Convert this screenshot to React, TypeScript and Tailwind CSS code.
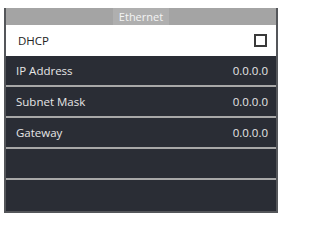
import React from 'react';

const rows = [
  { label: 'IP Address', value: '0.0.0.0' },
  { label: 'Subnet Mask', value: '0.0.0.0' },
  { label: 'Gateway', value: '0.0.0.0' },
  { label: '', value: '' },
  { label: '', value: '' },
];

const App = () => {
  return (
    <div className="w-[283px] h-[218px] bg-white pt-[8px] pl-[4px]" style={{ fontFamily: '"Open Sans", "Noto Sans", sans-serif' }}>
      <div className="w-[274px] h-[205px] border-l-2 border-r-2 border-b-2 border-[#54565a] flex flex-col">
        {/* Header */}
        <div className="h-[17px] bg-[#a4a4a4] flex justify-center">
          <div className="w-[56px] bg-[#afafaf] flex items-center justify-center text-[11px] leading-none text-[#f4f4f4]">
            Ethernet
          </div>
        </div>

        {/* DHCP */}
        <div className="h-[32px] bg-white flex items-center justify-between pl-[12px] pr-[9px]">
          <span className="text-[11.5px] text-[#222]">DHCP</span>
          <div className="w-[13px] h-[13px] border-2 border-[#3a3a3a] bg-white" />
        </div>

        {/* Rows */}
        <div className="flex-1 bg-[#2a2d35] flex flex-col">
          {rows.map((row, i) => (
            <div
              key={i}
              className={`h-[31px] flex items-center justify-between pl-[10px] pr-[8px] ${i < rows.length - 1 ? 'border-b-2 border-[#a8a8a8]' : ''}`}
            >
              <span className="text-[11.5px] text-[#e6e6e6]">{row.label}</span>
              <span className="text-[11.5px] text-[#e6e6e6]">{row.value}</span>
            </div>
          ))}
        </div>
      </div>
    </div>
  );
};

export default App;
